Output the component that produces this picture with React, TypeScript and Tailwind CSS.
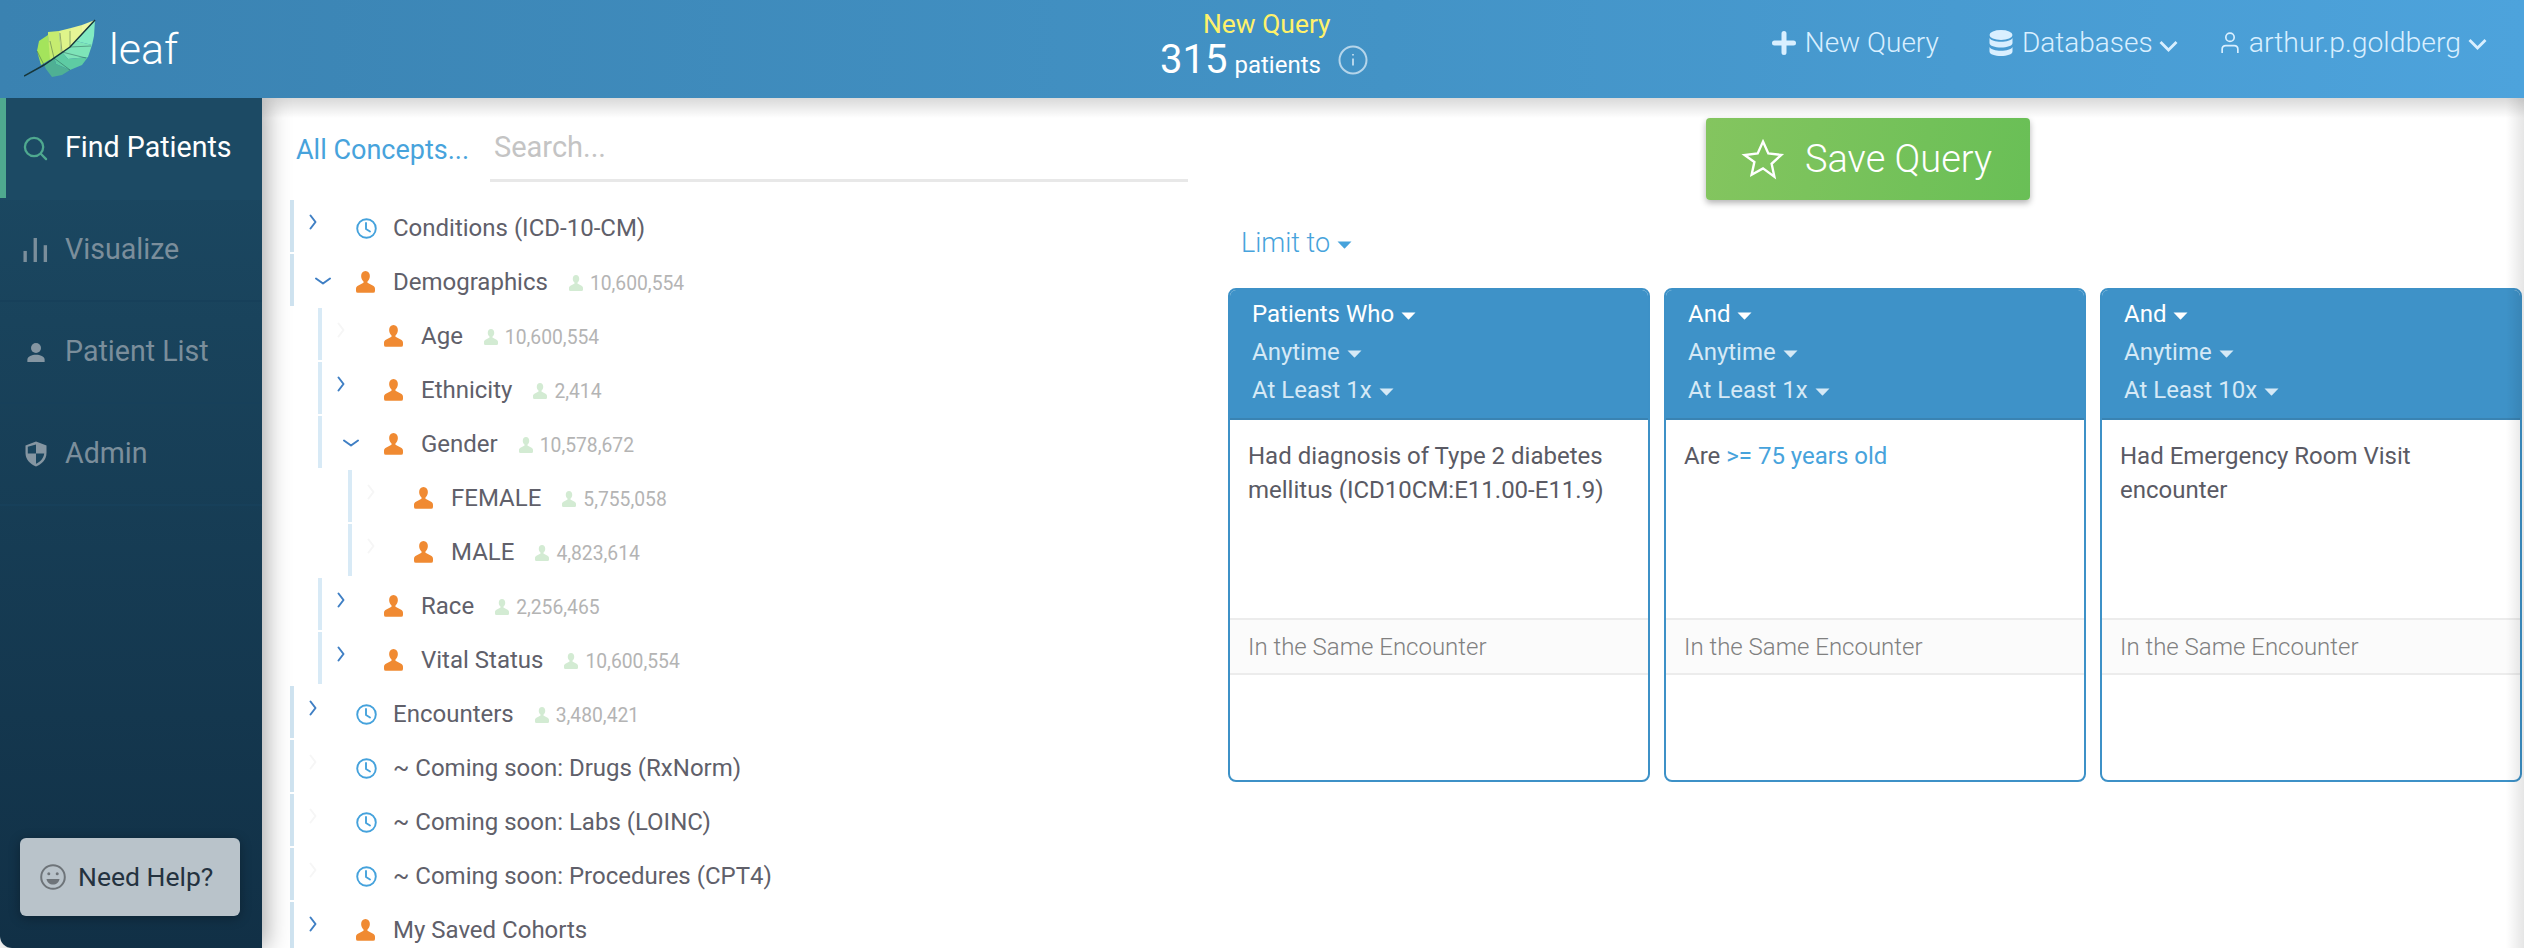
const ROBOTO = "font-['Roboto',sans-serif]";

function Caret({ className }: { className?: string }) {
  return (
    <svg width="15" height="8" viewBox="0 0 15 8" className={className} fill="currentColor">
      <path d="M0.5 0.5h14L8 7.2a0.8 0.8 0 0 1-1 0z" />
    </svg>
  );
}

function Chevron({ open, faint }: { open?: boolean; faint?: boolean }) {
  return (
    <svg width="16" height="16" viewBox="0 0 16 16" fill="none" stroke={faint ? '#f6f6f6' : '#3f7fc4'} strokeWidth="2" strokeLinecap="round" strokeLinejoin="round">
      {open ? <path d="M1 5.500L8 10.500l7-5" /> : <path d="M5.500 1.500L10.500 8l-5 6.500" />}
    </svg>
  );
}

function Person({ color, size }: { color: string; size: number }) {
  return (
    <svg width={size} height={size * 1.15} viewBox="0 0 20 23" fill={color}>
      <path d="M10 0c2.900 0 4.600 2.300 4.600 5.200 0 2.200-1 4.300-2.300 5.500-.5.500-.4 1.500.3 1.900l5.400 2.900c1.200.7 2 1.700 2 3.200V21a2 2 0 0 1-2 2H2a2 2 0 0 1-2-2v-2.300c0-1.500.8-2.500 2-3.200l5.400-2.900c.7-.4.8-1.400.3-1.900C6.400 9.500 5.400 7.400 5.400 5.200 5.400 2.300 7.100 0 10 0z" />
    </svg>
  );
}

function Clock() {
  return (
    <svg width="21" height="21" viewBox="0 0 21 21" fill="none" stroke="#45a2dc" strokeWidth="1.900" strokeLinecap="round" strokeLinejoin="round">
      <circle cx="10.500" cy="10.500" r="9.300" />
      <path d="M10 5v6l4 2.500" />
    </svg>
  );
}

function LeafLogo() {
  return (
    <svg width="72" height="60" viewBox="0 0 72 60" className="shrink-0">
      <path d="M17 46L13 32L15 22L24 16L27 40z" fill="#a4e45c" />
      <path d="M24 16L24 13L35 12L37 35L26 41z" fill="#c6ec70" />
      <path d="M35 12L47 9L47 28L37 35z" fill="#dff48a" />
      <path d="M47 9L58 6L58 17L47 28z" fill="#e6f596" />
      <path d="M58 6L71 1L58 17z" fill="#edf8a4" />
      <path d="M71 1L70 17L68 26L52 22z" fill="#82eac2" />
      <path d="M46 28L52 22L68 26L64 38L44 40L38 33z" fill="#7ee4b8" />
      <path d="M38 33L44 40L64 38L58 46L46 51L32 45L30 38z" fill="#5ecba3" />
      <path d="M20 46L30 38L32 45L46 51L38 56L28 58L22 50z" fill="#4fb094" />
      <path d="M0 57L20 46L46 28L71 1" stroke="#17363a" strokeWidth="1.500" fill="none" />
      <path d="M20 46L13 32M30 39L26 22M38 33L36 14M46 28L46 12M30 39L46 51M38 33L62 39M46 28L67 27" stroke="#17363a" strokeWidth="0.700" fill="none" opacity="0.55" />
    </svg>
  );
}

type Row = { depth: number; label: string; icon: 'clock' | 'person'; chevron?: 'open' | 'closed'; count?: string };

const ROWS: Row[] = [
  { depth: 0, label: 'Conditions (ICD-10-CM)', icon: 'clock', chevron: 'closed' },
  { depth: 0, label: 'Demographics', icon: 'person', chevron: 'open', count: '10,600,554' },
  { depth: 1, label: 'Age', icon: 'person', count: '10,600,554' },
  { depth: 1, label: 'Ethnicity', icon: 'person', chevron: 'closed', count: '2,414' },
  { depth: 1, label: 'Gender', icon: 'person', chevron: 'open', count: '10,578,672' },
  { depth: 2, label: 'FEMALE', icon: 'person', count: '5,755,058' },
  { depth: 2, label: 'MALE', icon: 'person', count: '4,823,614' },
  { depth: 1, label: 'Race', icon: 'person', chevron: 'closed', count: '2,256,465' },
  { depth: 1, label: 'Vital Status', icon: 'person', chevron: 'closed', count: '10,600,554' },
  { depth: 0, label: 'Encounters', icon: 'clock', chevron: 'closed', count: '3,480,421' },
  { depth: 0, label: '~ Coming soon: Drugs (RxNorm)', icon: 'clock' },
  { depth: 0, label: '~ Coming soon: Labs (LOINC)', icon: 'clock' },
  { depth: 0, label: '~ Coming soon: Procedures (CPT4)', icon: 'clock' },
  { depth: 0, label: 'My Saved Cohorts', icon: 'person', chevron: 'closed' },
];

const DEPTH_PAD = ['ml-0', 'ml-[28px]', 'ml-[58px]'];
const DEPTH_BAR = ['bg-[#cfe3f0]', 'bg-[#d8eaf6]', 'bg-[#d8eaf6]'];

function TreeRow({ row }: { row: Row }) {
  return (
    <div className={`flex h-[52px] mb-[2px] shrink-0 items-center ${DEPTH_PAD[row.depth]}`}>
      <div className={`h-full w-[4px] shrink-0 ${DEPTH_BAR[row.depth]}`} />
      <div className="relative flex h-full w-[62px] shrink-0 items-center">
        {row.chevron === 'closed' && <div className="absolute left-[11px] top-[14px]"><Chevron /></div>}
        {row.chevron === 'open' && <div className="absolute left-[21px] top-[19px]"><Chevron open /></div>}
        {!row.chevron && <div className="absolute left-[11px] top-[14px]"><Chevron faint /></div>}
      </div>
      <div className="flex w-[37px] shrink-0 justify-start pt-[4px]">
        {row.icon === 'clock' ? <Clock /> : <Person color="#f08a32" size={19} />}
      </div>
      <span className="pt-[4px] text-[24px] leading-none text-[#60606a] whitespace-nowrap">{row.label}</span>
      {row.count && (
        <span className="ml-[21px] flex items-center gap-[7px] pt-[7px]">
          <Person color="#d3ebd3" size={14} />
          <span className="text-[19.300px] leading-none text-[#b4b4b4]">{row.count}</span>
        </span>
      )}
    </div>
  );
}

function NavItem({ label, active, icon }: { label: string; active?: boolean; icon: React.ReactNode }) {
  return (
    <div className={`relative flex h-[102px] shrink-0 items-center border-b-2 ${active ? 'border-transparent bg-[#1c4a64]' : 'border-[#17405a]'}`}>
      {active && <div className="absolute bottom-0 left-0 top-0 w-[6px] bg-[#4fa98f]" />}
      <div className="flex w-[65px] shrink-0 justify-end pr-[17px]">{icon}</div>
      <span className={`pb-[2px] text-[28.600px] leading-none ${active ? 'text-white' : 'text-[#7b8e9b]'}`}>{label}</span>
    </div>
  );
}

function Sidebar() {
  return (
    <aside className="relative z-10 flex h-[850px] w-[262px] shrink-0 flex-col rounded-bl-[12px] bg-gradient-to-b from-[#1c4a64] to-[#113046] shadow-[4px_0_24px_rgba(0,0,0,0.35)]">
      <NavItem
        label="Find Patients"
        active
        icon={
          <svg width="25" height="25" viewBox="0 0 26 26" fill="none" stroke="#4fa98f" strokeWidth="2.400" strokeLinecap="round">
            <circle cx="11.500" cy="11.500" r="9.500" />
            <path d="M18.500 18.500L24 24" />
          </svg>
        }
      />
      <NavItem
        label="Visualize"
        icon={
          <svg width="25" height="26" viewBox="0 0 26 26" fill="#7b8e9b">
            <rect x="0.500" y="14" width="3.500" height="11.500" />
            <rect x="11" y="0.500" width="3.500" height="25" />
            <rect x="21.500" y="8" width="3.500" height="17.500" />
          </svg>
        }
      />
      <NavItem
        label="Patient List"
        icon={
          <svg width="20" height="21" viewBox="0 0 22 22" fill="#8596a2" className="mr-[2px]">
            <circle cx="11" cy="6" r="5.500" />
            <path d="M1.500 21.500V19c0-3.800 5-5.500 9.500-5.500s9.500 1.700 9.500 5.500v2.500z" />
          </svg>
        }
      />
      <NavItem
        label="Admin"
        icon={
          <svg width="22" height="26" viewBox="0 0 22 26" className="mr-[1px]">
            <path d="M11 0.500L21.500 4.500V12c0 6.500-4.500 11-10.500 13.500C5 23 0.500 18.500 0.500 12V4.500z" fill="#8596a2" />
            <path d="M11 3.400V12.500H2.800V5.800z M11 12.500h8.200c-.5 4.800-3.900 8.200-8.200 10.300z" fill="#1a455e" />
          </svg>
        }
      />
      <div className="mt-auto pb-[32px] pl-[20px] pr-[22px]">
        <div className="flex h-[78px] items-center rounded-[6px] bg-[#b9c3ca] pl-[20px] shadow-[0_2px_12px_rgba(0,0,0,0.3)]">
          <svg width="26" height="26" viewBox="0 0 26 26" fill="none" className="mr-[12px]">
            <circle cx="13" cy="13" r="11.800" stroke="#6e7479" strokeWidth="2" />
            <circle cx="8.800" cy="9.800" r="1.500" fill="#6e7479" />
            <circle cx="17.200" cy="9.800" r="1.500" fill="#6e7479" />
            <path d="M6.500 15h13c-.5 3.500-3.200 5.500-6.500 5.500S7 18.500 6.500 15z" fill="#6e7479" />
          </svg>
          <span className="text-[26.500px] leading-none text-[#24323f]">Need Help?</span>
        </div>
      </div>
    </aside>
  );
}

function Header() {
  return (
    <header className="relative z-20 flex h-[98px] shrink-0 items-center bg-[linear-gradient(90deg,#3a82b1,#4393c6_55%,#4da3dc)]">
      <div className="flex items-center pl-[24px]">
        <LeafLogo />
        <span className="ml-[13px] text-[43px] font-light leading-none text-white">leaf</span>
      </div>
      <div className="absolute left-[1160px] top-[9px] flex flex-col items-start">
        <span className="ml-[43px] text-[26.400px] leading-[30px] text-[#fff16a]">New Query</span>
        <div className="mt-[2px] flex items-baseline text-white">
          <span className="text-[40px] leading-[38px]">315</span>
          <span className="ml-[7px] text-[24px] leading-none">patients</span>
          <svg width="30" height="30" viewBox="0 0 30 30" fill="none" className="ml-[17px] self-center" stroke="#b5d5ea" strokeWidth="2">
            <circle cx="15" cy="15" r="13.500" />
            <path d="M15 13.500v7M15 9v1.500" />
          </svg>
        </div>
      </div>
      <nav className="ml-auto flex items-center pb-[12px] pr-[37px] text-[28px] font-light leading-none text-[#d9efff]">
        <svg width="24" height="24" viewBox="0 0 24 24" fill="#d9efff" className="mr-[9px]">
          <path d="M9.500 2.500a2.500 2.500 0 0 1 5 0v7h7a2.500 2.500 0 0 1 0 5h-7v7a2.500 2.500 0 0 1-5 0v-7h-7a2.500 2.500 0 0 1 0-5h7z" />
        </svg>
        <span>New Query</span>
        <svg width="24" height="26" viewBox="0 0 24 26" fill="#d9efff" className="ml-[50px] mr-[9px]">
          <ellipse cx="12" cy="5" rx="11.500" ry="5" />
          <path d="M0.500 8c1.500 2.500 6 3.800 11.500 3.800S22 10.500 23.500 8v5c0 2.800-5.500 4.500-11.500 4.500S0.500 15.800 0.500 13z" />
          <path d="M0.500 17c1.500 2.500 6 3.800 11.500 3.800s10-1.300 11.500-3.800v4.500c0 2.800-5.500 4.500-11.500 4.500S0.500 24.300 0.500 21.500z" />
        </svg>
        <span>Databases</span>
        <svg width="19" height="12" viewBox="0 0 19 12" fill="none" stroke="#d9efff" strokeWidth="2.800" className="ml-[6px] mt-[6px]">
          <path d="M1.500 2l8 8 8-8" />
        </svg>
        <svg width="18" height="22" viewBox="0 0 17 21" fill="none" stroke="#d9efff" strokeWidth="1.600" className="ml-[43px] mr-[10px]">
          <circle cx="8.500" cy="5" r="4" />
          <path d="M1 20v-3.500c0-2.500 2-3.500 3.500-3.500h8c1.500 0 3.500 1 3.500 3.500V20" />
        </svg>
        <span className="text-[28.400px]">arthur.p.goldberg</span>
        <svg width="19" height="12" viewBox="0 0 19 12" fill="none" stroke="#d9efff" strokeWidth="2.800" className="ml-[7px] mt-[2px]">
          <path d="M1.500 2l8 8 8-8" />
        </svg>
      </nav>
    </header>
  );
}

function SelectLine({ label, bright }: { label: string; bright?: boolean }) {
  return (
    <div className={`flex h-[38px] items-center gap-[7px] text-[24px] leading-none ${bright ? 'text-white' : 'text-[#d5e9f6]'}`}>
      <span>{label}</span>
      <Caret className="mt-[3px]" />
    </div>
  );
}

function QueryCard({ title, freq, children }: { title: string; freq: string; children: React.ReactNode }) {
  return (
    <div className="flex h-[494px] w-[422px] shrink-0 flex-col overflow-hidden rounded-[8px] border-2 border-[#3d91c7] bg-white">
      <div className="h-[130px] shrink-0 border-b-2 border-[#3a83b2] bg-[#3e92c8] pl-[22px] pt-[5px]">
        <SelectLine label={title} bright />
        <SelectLine label="Anytime" />
        <SelectLine label={freq} />
      </div>
      <div className="h-[198px] shrink-0 pl-[18px] pr-[16px] pt-[20px] text-[24px] leading-[33.600px] text-[#5a5a64]">{children}</div>
      <div className="flex h-[57px] shrink-0 items-center border-y-2 border-[#ececec] bg-[#fbfbfb] px-[18px] text-[24px] font-light text-[#808080]">In the Same Encounter</div>
    </div>
  );
}

export default function App() {
  return (
    <div className={`relative flex h-[948px] w-[2524px] flex-col overflow-hidden bg-white ${ROBOTO}`}>
      <Header />
      <div className="flex min-h-0 flex-1">
        <Sidebar />
        <section className="flex w-[928px] shrink-0 flex-col pl-[28px]">
          <div className="flex h-[102px] shrink-0 items-start pl-[6px]">
            <span className="mt-[39px] w-[194px] shrink-0 whitespace-nowrap text-[27px] leading-none text-[#47a3dc]">All Concepts...</span>
            <div className="mt-[14px] flex h-[70px] w-[698px] items-start border-b-[3px] border-[#e8e8e8] pl-[4px]">
              <span className="mt-[21px] text-[29px] leading-none text-[#c4c4c4]">Search...</span>
            </div>
          </div>
          {ROWS.map(row => (
            <TreeRow key={row.label} row={row} />
          ))}
        </section>
        <section className="flex min-w-0 flex-1 flex-col pl-[38px]">
          <div className="ml-[478px] mt-[20px] flex h-[82px] w-[324px] shrink-0 items-center rounded-[4px] bg-[linear-gradient(100deg,#84c55f,#69bf56)] pl-[35px] text-[38px] font-light leading-none text-white shadow-[0_3px_6px_rgba(0,0,0,0.3)]">
            <svg width="44" height="44" viewBox="0 0 24 24" fill="none" stroke="#fff" strokeWidth="1.300" strokeLinejoin="miter" className="mr-[20px]">
              <path d="M12 2.500l2.900 6.500 7.100.8-5.300 4.800 1.500 7L12 17.100l-6.200 3.500 1.500-7L2 9.800 9.100 9z" />
            </svg>
            Save Query
          </div>
          <div className="mt-[23px] flex h-[40px] shrink-0 items-center gap-[7px] pl-[13px] text-[27px] font-light leading-none text-[#47a3dc]">
            <span>Limit to</span>
            <Caret className="mt-[3px]" />
          </div>
          <div className="mt-[25px] flex gap-[14px]">
            <QueryCard title="Patients Who" freq="At Least 1x">
              Had diagnosis of Type 2 diabetes mellitus (ICD10CM:E11.00-E11.9)
            </QueryCard>
            <QueryCard title="And" freq="At Least 1x">
              Are <span className="text-[#47a3dc]">&gt;= 75 years old</span>
            </QueryCard>
            <QueryCard title="And" freq="At Least 10x">
              Had Emergency Room Visit encounter
            </QueryCard>
          </div>
        </section>
      </div>
      <div className="pointer-events-none absolute bottom-0 right-0 top-[98px] w-[18px] bg-gradient-to-r from-transparent to-black/10" />
      <div className="pointer-events-none absolute left-0 right-0 top-[98px] z-0 h-[20px] bg-gradient-to-b from-black/15 to-transparent" />
    </div>
  );
}
